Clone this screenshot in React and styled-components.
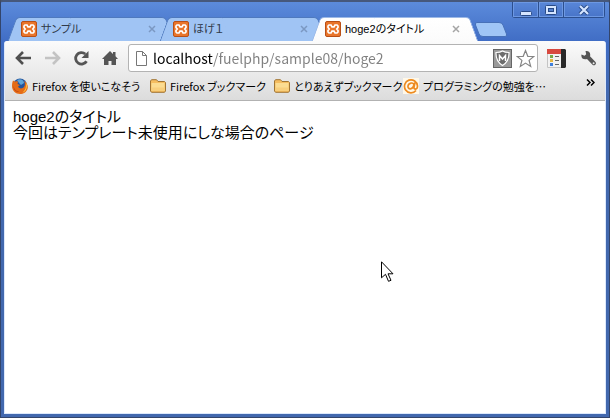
import React from "react";
import styled, { createGlobalStyle, css } from "styled-components";

const GlobalStyle = createGlobalStyle`
  *, *::before, *::after { box-sizing: border-box; }
  body { margin: 0; background: #4a4f5c; }
  button, input { font: inherit; color: inherit; }
  svg { display: block; flex: none; }
`;

const Window = styled.div`
  display: flex;
  flex-direction: column;
  min-height: 100vh;
  padding: 0 3px 3px;
  border: 1px solid #33456b;
  border-top: 2px solid #46587c;
  border-radius: 3px 3px 0 0;
  background: linear-gradient(#5c8bdb, #3f6cc4 41px, #4268ae 100px, #4268ae);
  font-family: "Liberation Sans", "Noto Sans CJK JP", sans-serif;
  font-feature-settings: "palt";
  font-size: 11px;
  color: #000;
`;

const TitleBar = styled.header`
  display: flex;
  justify-content: space-between;
  align-items: flex-start;
  height: 39px;
`;

const TabStrip = styled.nav`
  display: flex;
  align-items: flex-end;
  height: 39px;
  padding-left: 4px;
`;

const fill = css`
  background: ${(p) => (p.$active ? "linear-gradient(#ffffff, #fbfbfb)" : "#a0c4f4")};
  border: 0 solid ${(p) => (p.$active ? "#9db9e6" : "#4f79bd")};
`;

const Tab = styled.div`
  position: relative;
  z-index: ${(p) => (p.$active ? 2 : 1)};
  isolation: isolate;
  display: flex;
  align-items: center;
  gap: 4px;
  width: 166px;
  height: 24px;
  margin-right: -14px;
  padding: 0 17px 0 13px;

  &::before, &::after {
    content: "";
    position: absolute;
    z-index: -1;
    top: 0;
    bottom: 0;
    ${fill}
    border-top-width: 1px;
  }
  &::before {
    left: 4px;
    right: 50%;
    border-left-width: 1px;
    border-top-left-radius: 4px;
    transform: skewX(-20deg);
  }
  &::after {
    left: 40%;
    right: 4px;
    border-right-width: 1px;
    border-top-right-radius: 4px;
    transform: skewX(20deg);
  }
`;

const TabTitle = styled.a`
  flex: 1;
  color: ${(p) => (p.$active ? "#000" : "#303a4a")};
  line-height: 16px;
  white-space: nowrap;
  text-decoration: none;
`;

const PlainButton = styled.button`
  display: flex;
  align-items: center;
  justify-content: center;
  padding: 0;
  border: 0;
  background: none;
`;

const CloseTab = styled(PlainButton)`
  width: 10px;
  height: 16px;
`;

const NewTab = styled(PlainButton)`
  width: 34px;
  height: 15px;
  margin: 0 0 4px 10px;
`;

const WindowControls = styled.div`
  display: flex;
  height: 16px;
  margin-right: 1px;
  border: 1px solid #2c4f8f;
  border-top: 0;
  border-radius: 0 0 3px 3px;
`;

const ControlButton = styled(PlainButton)`
  width: ${(p) => (p.$wide ? 41 : 25)}px;
  background: linear-gradient(#5987d8, #4874c8);
  box-shadow: inset 0 0 0 1px #6d98e2;
  & + & { border-left: 1px solid #2c4f8f; }
`;

const Panel = styled.div`
  display: flex;
  flex: 1;
  flex-direction: column;
  border: 1px solid #dce8fb;
  border-top: 0;
  border-radius: 3px 3px 0 0;
  background: #fff;
`;

const Chrome = styled.div`
  border-bottom: 1px solid #b2b2b2;
  border-radius: 3px 3px 0 0;
  background: linear-gradient(#fbfbfb, #dcdcdc);
`;

const Toolbar = styled.div`
  display: flex;
  align-items: center;
  height: 34px;
  padding: 0 7px 0 8px;
`;

const NavButtons = styled.div`
  display: flex;
  gap: 9px;
  margin-right: 8px;
`;

const ToolButton = styled(PlainButton)`
  width: 20px;
  height: 20px;
`;

const AddressBox = styled.label`
  display: flex;
  flex: 1;
  align-items: center;
  gap: 4px;
  min-width: 0;
  height: 28px;
  padding: 0 2px 0 6px;
  border: 1px solid #b3b3b3;
  border-radius: 3px;
  background: #fff;
`;

const AddressInput = styled.input`
  flex: 1;
  min-width: 0;
  height: 24px;
  padding: 0 0 0 1px;
  border: 0;
  outline: 0;
  background: linear-gradient(to right, #000 61px, #808080 61px);
  background-clip: text;
  -webkit-background-clip: text;
  color: transparent;
  font-family: "Noto Sans CJK JP", sans-serif;
  font-size: 14px;
`;

const Extensions = styled.div`
  display: flex;
  gap: 12px;
  margin-left: 8px;
`;

const BookmarkBar = styled.nav`
  display: flex;
  align-items: flex-start;
  justify-content: space-between;
  height: 25px;
  padding: 2px 10px 0 7px;
  font-family: "Noto Sans CJK JP", sans-serif;
`;

const BookmarkList = styled.div`
  display: flex;
  gap: 12px;
`;

const Bookmark = styled.a`
  display: flex;
  align-items: center;
  gap: 4px;
  width: ${(p) => p.$width}px;
  color: #000;
  line-height: 18px;
  white-space: nowrap;
  text-decoration: none;
`;

const More = styled(PlainButton)`
  height: 10px;
`;

const Page = styled.main`
  position: relative;
  flex: 1;
  padding: 8px;
  font-size: 15px;
  line-height: 16px;
`;

const Line = styled.p`
  margin: 0;
`;

const Pointer = styled.svg`
  position: absolute;
  left: 376px;
  top: 160px;
`;

const Favicon = () => (
  <svg width="16" height="16" viewBox="0 0 16 16">
    <rect x=".5" y=".5" width="15" height="15" rx="1.5" fill="#e9752b" stroke="#b94f16" />
    <path d="M4 4h2l1 1.800h2L10 4h2l1 1v1.500L11.800 8 13 9.500V11l-1 1h-2l-1-1.800H7L6 12H4l-1-1V9.500L4.200 8 3 6.500V5z" fill="none" stroke="#fff" strokeWidth="1.700" />
  </svg>
);

const Cross = ({ color }) => (
  <svg width="8" height="8" viewBox="0 0 8 8">
    <path d="M1 1l6 6M7 1L1 7" stroke={color} strokeWidth="1.500" />
  </svg>
);

const Arrow = ({ color, flip }) => (
  <svg width="17" height="14" viewBox="0 0 17 14">
    <g transform={flip ? "translate(17 0) scale(-1 1)" : undefined}>
      <path d="M8 1L2 7l6 6M2 7h14" fill="none" stroke={color} strokeWidth="2.600" />
    </g>
  </svg>
);

const Reload = () => (
  <svg width="17" height="17" viewBox="0 0 17 17">
    <path d="M13.500 11.200A5.800 5.800 0 1 1 12.300 4" fill="none" stroke="#555" strokeWidth="2.800" />
    <path d="M15.500 1v7H8.500z" fill="#555" />
  </svg>
);

const Home = () => (
  <svg width="16" height="16" viewBox="0 0 16 16">
    <path d="M8 1l3 3V2h2.500v4.200L16 9h-2v6H9.500v-4h-3v4H2V9H0z" fill="#555" />
  </svg>
);

const Doc = () => (
  <svg width="13" height="15" viewBox="0 0 13 15">
    <path d="M1.500.5h6l4 4v10h-10zM7.500.5v4h4" fill="#fff" stroke="#777" />
  </svg>
);

const Shield = () => (
  <svg width="19" height="19" viewBox="0 0 19 19">
    <rect x=".5" y=".5" width="18" height="18" fill="#9a9a9a" stroke="#666" />
    <path d="M3 3.500c3 0 5-.5 6.500-1.500C11 3 13 3.500 16 3.500c.3 6-1.500 10-6.500 13C4.500 13.500 2.700 9.500 3 3.500z" fill="#6c6c6c" stroke="#fff" strokeWidth="1.200" />
    <path d="M6.500 12V6.500l3 3.500 3-3.500V12" fill="none" stroke="#fff" strokeWidth="1.500" />
  </svg>
);

const Star = () => (
  <svg width="19" height="19" viewBox="0 0 19 19">
    <path d="M9.500 1.500l2.300 5.800 6 .2-4.700 3.900 1.600 6-5.200-3.300-5.200 3.300 1.600-6L1.200 7.500l6-.2z" fill="#fff" stroke="#858585" strokeWidth="1.200" />
  </svg>
);

const ListIcon = () => (
  <svg width="19" height="19" viewBox="0 0 19 19">
    <path d="M0 0h15v19H0z" fill="#f2f2f2" />
    <path d="M.5 5v13.500H14" fill="none" stroke="#c4c4c4" />
    <path d="M0 0h14v5H0z" fill="#d8493f" />
    <path d="M14 0h4l1 1v17l-1 1h-4z" fill="#292929" />
    <path d="M3 6h3v3H3z" fill="#76aa49" />
    <path d="M3 10h3v3H3z" fill="#e6b83f" />
    <path d="M3 14h3v3H3z" fill="#3f7fdb" />
    <path d="M8 7.500h4M8 11.500h4M8 15.500h4" stroke="#666" />
  </svg>
);

const Wrench = () => (
  <svg width="17" height="17" viewBox="0 0 17 17">
    <path d="M1.500 4.500l3 1.200 1.700-1.500L5.500 1C9 .5 11 3 10 6.300l5.500 5.700c1.600 2-1.200 4.500-3 2.800L7 9C3.500 10 .7 8 1.500 4.500z" fill="#555" />
    <circle cx="13.600" cy="13.200" r="1" fill="#eee" />
  </svg>
);

const Folder = () => (
  <svg width="16" height="14" viewBox="0 0 16 14">
    <path d="M.5 12V2L1.500.7h5L8 2.500h6.500l1 1V12l-1 1.300h-13z" fill="#f5bd60" stroke="#a07535" />
    <path d="M1.500 4h13v8h-13z" fill="#fbdc92" />
    <path d="M2 8.500h12V12H2z" fill="#f8cf7d" />
  </svg>
);

const Fox = () => (
  <svg width="16" height="16" viewBox="0 0 16 16">
    <circle cx="8" cy="7.500" r="7" fill="#24549c" />
    <path d="M5 2c3-2 7 0 7 3L9 7 7 5z" fill="#5fa5d8" />
    <path d="M1 2.500l2 1.300c1-.6 2-.6 3 0L5.500 6 8 7 6 8.500c1 2.500 4.500 2.500 6 .5 1.500-2 1-4.500 0-6 3 1.500 4.500 5 3.500 8-1 3-4 5-7.500 5-4.500 0-8-3.500-8-8 0-2 .3-4 1-5.500z" fill="#e56b16" />
    <path d="M14 4.500c2 3.500 1 8.500-3.500 10.300 3-2.800 4-6 3.500-10.300z" fill="#ffc43c" />
    <path d="M1.500 8c.5 3.500 3 5.500 6 6-4 .2-6-2.500-6-6z" fill="#b73a12" />
  </svg>
);

const AtIcon = () => (
  <svg width="16" height="16" viewBox="0 0 16 16">
    <path d="M0 0h16v16H0z" fill="#fff8e8" />
    <path d="M13 12.500A6.500 6.500 0 1 1 14.500 8c0 4-4 4-3.500 1l1-4.500M11 7c-.5-3-5.500-2.500-6 1-.4 4 4.800 3.800 6-1z" fill="none" stroke="#ed8b20" strokeWidth="1.700" />
  </svg>
);

const tabs = [
  { title: "サンプル" },
  { title: "ほげ１" },
  { title: "hoge2のタイトル", active: true },
];

const bookmarks = [
  { title: "Firefox を使いこなそう", icon: <Fox />, width: 126 },
  { title: "Firefox ブックマーク", icon: <Folder />, width: 112 },
  { title: "とりあえずブックマーク", icon: <Folder />, width: 117 },
  { title: "プログラミングの勉強を…", icon: <AtIcon />, width: 140 },
];

export default function App() {
  return (
    <Window lang="ja">
      <GlobalStyle />
      <TitleBar>
        <TabStrip>
          {tabs.map(({ title, active }) => (
            <Tab key={title} $active={active}>
              <Favicon />
              <TabTitle href="#" $active={active}>{title}</TabTitle>
              <CloseTab aria-label="Close tab">
                <Cross color={active ? "#a5a5a5" : "#7b98c2"} />
              </CloseTab>
            </Tab>
          ))}
          <NewTab aria-label="New tab">
            <svg width="34" height="15" viewBox="0 0 34 15">
              <path d="M3 .5h22q3 0 4 2.500l3.500 9q.8 2.500-1.500 2.500H9q-3 0-4-2.500L1.500 3Q.8.500 3 .500z" fill="#9fc5f6" stroke="#4771b8" />
            </svg>
          </NewTab>
        </TabStrip>
        <WindowControls>
          <ControlButton aria-label="Minimize">
            <svg width="12" height="12" viewBox="0 0 12 12">
              <rect x=".5" y="7.500" width="11" height="4" rx="1" fill="#d5e5ff" stroke="#284a87" />
            </svg>
          </ControlButton>
          <ControlButton aria-label="Maximize">
            <svg width="12" height="10" viewBox="0 0 12 10">
              <rect x=".5" y=".5" width="11" height="9" rx="1" fill="#d5e5ff" stroke="#284a87" />
              <rect x="3.500" y="3.500" width="5" height="3" fill="#527fcd" stroke="#284a87" />
            </svg>
          </ControlButton>
          <ControlButton aria-label="Close" $wide>
            <svg width="12" height="10" viewBox="0 0 12 10">
              <path d="M2 1l8 8M10 1L2 9" stroke="#284a87" strokeWidth="4" />
              <path d="M2 1l8 8M10 1L2 9" stroke="#d5e5ff" strokeWidth="2.200" />
            </svg>
          </ControlButton>
        </WindowControls>
      </TitleBar>
      <Panel>
        <Chrome>
          <Toolbar>
            <NavButtons>
              <ToolButton aria-label="Back"><Arrow color="#505050" /></ToolButton>
              <ToolButton aria-label="Forward"><Arrow color="#c3c3c3" flip /></ToolButton>
              <ToolButton aria-label="Reload"><Reload /></ToolButton>
              <ToolButton aria-label="Home"><Home /></ToolButton>
            </NavButtons>
            <AddressBox>
              <Doc />
              <AddressInput aria-label="Address" defaultValue="localhost/fuelphp/sample08/hoge2" />
              <Shield />
              <PlainButton type="button" aria-label="Bookmark this page"><Star /></PlainButton>
            </AddressBox>
            <Extensions>
              <ToolButton aria-label="Bookmark list"><ListIcon /></ToolButton>
              <ToolButton aria-label="Settings"><Wrench /></ToolButton>
            </Extensions>
          </Toolbar>
          <BookmarkBar>
            <BookmarkList>
              {bookmarks.map(({ title, icon, width }) => (
                <Bookmark key={title} href="#" $width={width}>{icon}{title}</Bookmark>
              ))}
            </BookmarkList>
            <More aria-label="More bookmarks">
              <svg width="9" height="7" viewBox="0 0 9 7">
                <path d="M1 .5l3 3-3 3M5 .5l3 3-3 3" fill="none" stroke="#000" strokeWidth="1.500" />
              </svg>
            </More>
          </BookmarkBar>
        </Chrome>
        <Page>
          <Line>hoge2のタイトル</Line>
          <Line>今回はテンプレート未使用にしな場合のページ</Line>
          <Pointer width="13" height="22" viewBox="0 0 13 22">
            <path d="M.5.800v16l4-3.500 3 7 2.500-1-3-6.500h5z" fill="#fff" stroke="#000" />
          </Pointer>
        </Page>
      </Panel>
    </Window>
  );
}
